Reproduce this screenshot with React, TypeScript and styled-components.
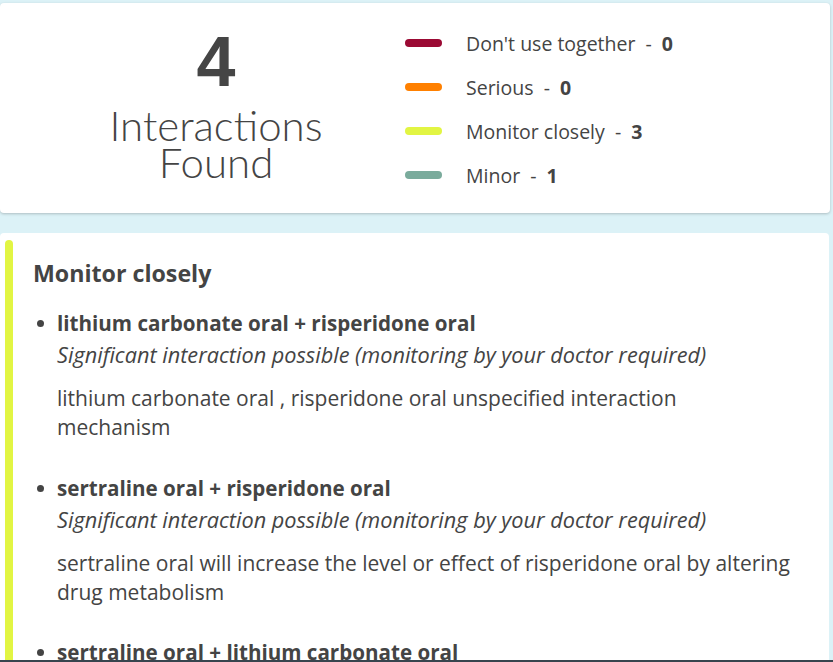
import React from 'react';
import styled, { createGlobalStyle } from 'styled-components';

const GlobalStyle = createGlobalStyle`
  html, body {
    margin: 0;
    padding: 0;
    background: #dcf2f7;
    font-family: "Open Sans", "Noto Sans", sans-serif;
    color: #444;
  }
`;

const Page = styled.div`
  box-sizing: border-box;
  padding: 3px 3px 0 0;
  display: flex;
  flex-direction: column;
  gap: 20px;
  height: 662px;
  overflow: hidden;
  border-bottom: 2px solid #37444e;
`;

const SummaryCard = styled.section`
  background: #fff;
  border-radius: 4px;
  box-shadow: 0 1px 3px rgba(0, 0, 0, 0.22);
  height: 210px;
  display: flex;
  flex-shrink: 0;
`;

const Total = styled.div`
  width: 432px;
  text-align: center;
  padding-top: 24px;
`;

const Count = styled.div`
  font-family: "Liberation Sans", Arial, sans-serif;
  font-weight: 700;
  font-size: 70px;
  line-height: 70px;
  color: #454545;
`;

const CountLabel = styled.div`
  font-family: Lato, sans-serif;
  font-weight: 300;
  font-size: 42px;
  line-height: 37px;
  margin-top: 10px;
  color: #444;
`;

const Legend = styled.ul`
  list-style: none;
  margin: 0;
  padding: 27px 0 0 0;
  display: flex;
  flex-direction: column;
  gap: 18px;
`;

const LegendRow = styled.li`
  display: flex;
  align-items: center;
  height: 26px;
  font-size: 19.5px;
`;

const Swatch = styled.span<{ color: string }>`
  width: 37px;
  height: 8px;
  border-radius: 4px;
  background: ${props => props.color};
  margin: 0 24px 0 -27px;
`;

const LegendCount = styled.b`
  margin-left: 10px;
  font-weight: 700;
`;

const DetailCard = styled.section`
  background: #fff;
  border-radius: 4px 4px 0 0;
  margin-right: 1px;
  display: flex;
  flex: 1;
`;

const SeverityBar = styled.div<{ color: string }>`
  width: 8px;
  margin: 7px 0 0 5px;
  border-radius: 4px 4px 0 0;
  background: ${props => props.color};
  flex-shrink: 0;
`;

const DetailBody = styled.div`
  flex: 1;
  padding: 25px 36px 0 20px;
`;

const SectionTitle = styled.h2`
  margin: 0 0 19px;
  font-size: 23.2px;
  font-weight: 700;
  line-height: 30px;
`;

const List = styled.ul`
  list-style: none;
  margin: 0;
  padding: 0 0 0 24px;
`;

const Item = styled.li`
  position: relative;
  margin-bottom: 29.5px;
  &::before {
    content: '';
    position: absolute;
    left: -20px;
    top: 13px;
    width: 7px;
    height: 7px;
    border-radius: 50%;
    background: #444;
  }
`;

const Pair = styled.div`
  font-size: 20.6px;
  font-weight: 700;
  line-height: 32px;
`;

const Severity = styled.div`
  font-size: 21.7px;
  font-style: italic;
  line-height: 32px;
`;

const Description = styled.p`
  margin: 13px 0 0;
  font-size: 21px;
  line-height: 29px;
`;

const legend = [
  { label: "Don't use together", count: 0, color: '#9b0a34' },
  { label: 'Serious', count: 0, color: '#ff8000' },
  { label: 'Monitor closely', count: 3, color: '#e2f543' },
  { label: 'Minor', count: 1, color: '#7aab9c' },
];

const interactions = [
  {
    pair: 'lithium carbonate oral + risperidone oral',
    note: 'Significant interaction possible (monitoring by your doctor required)',
    text: 'lithium carbonate oral , risperidone oral unspecified interaction mechanism',
  },
  {
    pair: 'sertraline oral + risperidone oral',
    note: 'Significant interaction possible (monitoring by your doctor required)',
    text: 'sertraline oral will increase the level or effect of risperidone oral by altering drug metabolism',
  },
  {
    pair: 'sertraline oral + lithium carbonate oral',
    note: 'Significant interaction possible (monitoring by your doctor required)',
    text: 'sertraline oral and lithium carbonate oral both increase serotonin levels',
  },
];

export default function App() {
  return (
    <>
      <GlobalStyle />
      <Page>
        <SummaryCard>
          <Total>
            <Count>4</Count>
            <CountLabel>
              Interactions
              <br />
              Found
            </CountLabel>
          </Total>
          <Legend>
            {legend.map(l => (
              <LegendRow key={l.label}>
                <Swatch color={l.color} />
                {l.label}&nbsp;&nbsp;-
                <LegendCount>{l.count}</LegendCount>
              </LegendRow>
            ))}
          </Legend>
        </SummaryCard>
        <DetailCard>
          <SeverityBar color="#e2f543" />
          <DetailBody>
            <SectionTitle>Monitor closely</SectionTitle>
            <List>
              {interactions.map(i => (
                <Item key={i.pair}>
                  <Pair>{i.pair}</Pair>
                  <Severity>{i.note}</Severity>
                  <Description>{i.text}</Description>
                </Item>
              ))}
            </List>
          </DetailBody>
        </DetailCard>
      </Page>
    </>
  );
}
